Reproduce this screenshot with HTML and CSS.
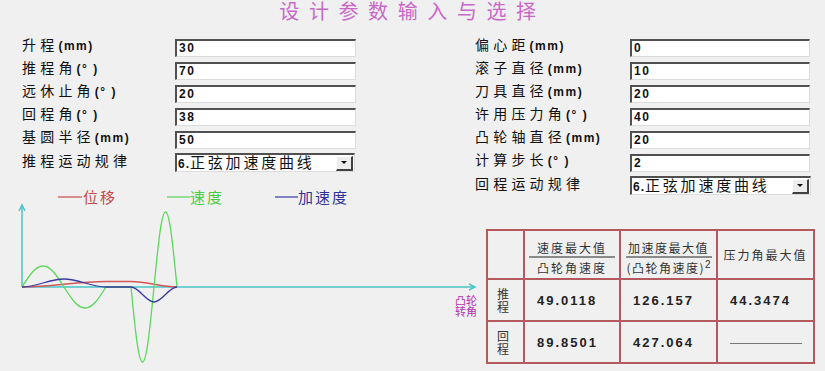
FILE: index.html
```html
<!DOCTYPE html>
<html lang="zh-CN">
<head>
    <meta charset="UTF-8">
    <meta name="viewport" content="width=device-width, initial-scale=1.0">
    <title>设计参数输入与选择</title>
    <link rel="stylesheet" href="styles.css">
</head>
<body>
    <h1 class="title">设计参数输入与选择</h1>
    <div class="main">
        <div class="col col-left">
            <div class="form-group">
                <label>升程<b>(mm)</b></label>
                <input type="text" value="30">
            </div>
            <div class="form-group">
                <label>推程角<b>(°&nbsp;)</b></label>
                <input type="text" value="70">
            </div>
            <div class="form-group">
                <label>远休止角<b>(°&nbsp;)</b></label>
                <input type="text" value="20">
            </div>
            <div class="form-group">
                <label>回程角<b>(°&nbsp;)</b></label>
                <input type="text" value="38">
            </div>
            <div class="form-group">
                <label>基圆半径<b>(mm)</b></label>
                <input type="text" value="50">
            </div>
            <div class="form-group">
                <label>推程运动规律</label>
                <div class="combo">
                    <span class="combo-text"><b>6.</b>正弦加速度曲线</span>
                    <span class="combo-btn"><i></i></span>
                </div>
            </div>

            <svg class="chart" width="470" height="197" viewBox="0 174 470 197">
                <!-- legend -->
                <line x1="58" y1="197" x2="82" y2="197" stroke="#c84a4a" stroke-width="1.2"/>
                <text x="83" y="203" class="legend" fill="#c04848">位移</text>
                <line x1="167" y1="197" x2="190" y2="197" stroke="#58d458" stroke-width="1.2"/>
                <text x="190" y="203" class="legend" fill="#48cc48">速度</text>
                <line x1="275" y1="197" x2="298" y2="197" stroke="#3a3aa0" stroke-width="1.2"/>
                <text x="298" y="203" class="legend" fill="#30309a">加速度</text>

                <!-- axes -->
                <g stroke="#48c4c8" stroke-width="1.5" fill="none">
                    <line x1="22" y1="287" x2="22" y2="205"/>
                    <polyline points="19,211 22,205 25,211"/>
                    <line x1="22" y1="287" x2="475" y2="287"/>
                    <polyline points="469,284 475,287 469,290"/>
                </g>
                <text x="455" y="305" class="axis-label">凸轮</text>
                <text x="455" y="316" class="axis-label">转角</text>

                <!-- displacement -->
                <path d="M22 287 C51.4 287 76.6 281.5 106 281.5 L131 281.5 C147.1 281.5 160.9 287 177 287"
                      stroke="#d05858" stroke-width="1.3" fill="none"/>
                <!-- velocity -->
                <path d="M22 287 C29.6 275 35.4 266 43 266 C50.6 266 56.4 275 64 287 C71.6 299 77.4 308 85 308 C92.6 308 98.4 299 106 287 L131 287
                         C135.2 329.9 138.4 362 142.5 362 C146.6 362 149.8 329.9 154 287 C158.2 244.1 161.4 212 165.5 212 C169.6 212 172.8 244.1 177 287"
                      stroke="#5ad85a" stroke-width="1.3" fill="none"/>
                <!-- acceleration -->
                <path d="M22 287 C36.7 287 49.3 279 64 279 C78.7 279 91.3 287 106 287 L131 287 C139.1 287 145.9 302 154 302 C162.1 302 168.9 287 177 287"
                      stroke="#3a3aa0" stroke-width="1.3" fill="none"/>
            </svg>
        </div>

        <div class="col col-right">
            <div class="form-group">
                <label>偏心距<b>(mm)</b></label>
                <input type="text" value="0">
            </div>
            <div class="form-group">
                <label>滚子直径<b>(mm)</b></label>
                <input type="text" value="10">
            </div>
            <div class="form-group">
                <label>刀具直径<b>(mm)</b></label>
                <input type="text" value="20">
            </div>
            <div class="form-group">
                <label>许用压力角<b>(°&nbsp;)</b></label>
                <input type="text" value="40">
            </div>
            <div class="form-group">
                <label>凸轮轴直径<b>(mm)</b></label>
                <input type="text" value="20">
            </div>
            <div class="form-group">
                <label>计算步长<b>(°&nbsp;)</b></label>
                <input type="text" value="2">
            </div>
            <div class="form-group">
                <label>回程运动规律</label>
                <div class="combo">
                    <span class="combo-text"><b>6.</b>正弦加速度曲线</span>
                    <span class="combo-btn"><i></i></span>
                </div>
            </div>

            <table class="result">
                <tr class="head">
                    <td class="c0"></td>
                    <td class="c1">
                        <div class="frac"><span class="num">速度最大值</span><span class="den">凸轮角速度</span></div>
                    </td>
                    <td class="c2">
                        <div class="frac"><span class="num">加速度最大值</span><span class="den">(凸轮角速度)<sup>2</sup></span></div>
                    </td>
                    <td class="c3 plain">压力角最大值</td>
                </tr>
                <tr>
                    <td class="side">推<br>程</td>
                    <td class="val">49.0118</td>
                    <td class="val">126.157</td>
                    <td class="val">44.3474</td>
                </tr>
                <tr>
                    <td class="side">回<br>程</td>
                    <td class="val">89.8501</td>
                    <td class="val">427.064</td>
                    <td class="val"><span class="dash"></span></td>
                </tr>
            </table>
        </div>
    </div>
</body>
</html>
```

FILE: styles.css
```css
body {
    margin: 0;
    width: 825px;
    height: 371px;
    overflow: hidden;
    background-color: #f0f0f0;
    color: #111;
    font-family: "Noto Sans CJK SC", "Liberation Sans", sans-serif;
}

.title {
    margin: 0;
    height: 28px;
    font-size: 20px;
    line-height: 22px;
    font-weight: normal;
    letter-spacing: 9.6px;
    text-align: center;
    color: #c868c8;
}

.main {
    display: flex;
    padding-top: 8px;
}

.col-left {
    width: 470px;
    flex: none;
}

.col-left .form-group {
    padding-left: 22px;
}

.col-right {
    padding-left: 5px;
}

.form-group {
    display: flex;
    align-items: center;
    height: 23px;
}

.form-group label {
    flex: none;
    margin-bottom: 6px;
    font-size: 14px;
    line-height: 18px;
    letter-spacing: 4.2px;
    white-space: nowrap;
}

.col-left label {
    width: 153px;
}

.col-right label {
    width: 155px;
}

.form-group label b {
    font-family: "Liberation Sans", sans-serif;
    font-size: 12px;
    letter-spacing: 1.5px;
}

.form-group input,
.combo {
    box-sizing: border-box;
    height: 18px;
    margin: 0;
    background-color: #fff;
    border-style: solid;
    border-width: 2px 1px 1px 2px;
    border-color: #505050 #dcdcdc #dcdcdc #505050;
    border-radius: 0;
    outline: none;
}

.form-group input {
    width: 181px;
    padding: 0 2px;
    font-family: "Liberation Sans", sans-serif;
    font-size: 12px;
    font-weight: bold;
    letter-spacing: 1.5px;
    color: #111;
}

.col-right input {
    width: 180px;
}

.combo {
    display: flex;
    align-items: center;
    width: 180px;
    height: 19px;
    padding-left: 1px;
}

.col-right .combo {
    width: 181px;
}

.combo-text {
    flex: 1;
    font-size: 15px;
    line-height: 17px;
    letter-spacing: 2.8px;
    white-space: nowrap;
}

.combo-text b {
    font-family: "Liberation Sans", sans-serif;
    font-size: 12px;
    letter-spacing: 1px;
}

.combo-btn {
    display: flex;
    align-items: center;
    justify-content: center;
    box-sizing: border-box;
    width: 17px;
    height: 15px;
    margin-right: 1px;
    background-color: #ececec;
    border-style: solid;
    border-width: 1px 2px 2px 1px;
    border-color: #fff #404040 #404040 #fff;
}

.combo-btn i {
    width: 0;
    height: 0;
    border-left: 3px solid transparent;
    border-right: 3px solid transparent;
    border-top: 3px solid #111;
}

.chart {
    display: block;
    overflow: visible;
}

.legend {
    font-family: "Noto Sans CJK SC", sans-serif;
    font-size: 15px;
    letter-spacing: 2px;
}

.axis-label {
    font-family: "Noto Sans CJK SC", sans-serif;
    font-size: 11px;
    fill: #b030b0;
}

.result {
    width: 327px;
    margin-top: 32px;
    margin-left: 11px;
    border-collapse: collapse;
    table-layout: fixed;
    color: #222;
}

.result td {
    border: 2px solid #b45a5e;
    padding: 0;
    height: 40px;
    white-space: nowrap;
    overflow: visible;
}

.result tr.head td {
    height: 47px;
    text-align: center;
}

.result .c0 {
    width: 35px;
}

.result .c1 {
    width: 94px;
}

.result .c2,
.result .c3 {
    width: 95px;
}

.frac {
    display: inline-flex;
    flex-direction: column;
    align-items: center;
    width: 86px;
    font-size: 12px;
    line-height: 15px;
    letter-spacing: 2px;
    color: #333;
}

.num {
    align-self: stretch;
    text-align: center;
    border-bottom: 2px solid #8a8a8a;
    padding-bottom: 1px;
    margin-bottom: 2px;
}

.c2 .frac {
    letter-spacing: 1.5px;
}

.den sup {
    font-family: "Liberation Sans", sans-serif;
    font-size: 10px;
    line-height: 0;
    letter-spacing: 0;
}

.plain {
    font-size: 12px;
    letter-spacing: 2px;
    color: #333;
}

.result td.side {
    padding-left: 9px;
    font-size: 12px;
    line-height: 13px;
    color: #333;
}

.result td.val {
    padding-left: 12px;
    font-family: "Liberation Sans", sans-serif;
    font-size: 13px;
    font-weight: bold;
    letter-spacing: 2px;
    color: #222;
}

.dash {
    display: inline-block;
    width: 72px;
    height: 1px;
    vertical-align: middle;
    background-color: #777;
}
```
